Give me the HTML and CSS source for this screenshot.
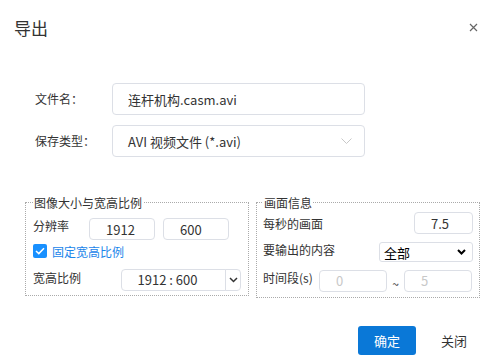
FILE: index.html
```html
<!DOCTYPE html>
<html lang="zh-CN">
<head>
    <meta charset="UTF-8">
    <meta name="viewport" content="width=device-width, initial-scale=1.0">
    <title>导出</title>
    <link rel="stylesheet" href="styles.css">
</head>
<body>

    <div class="dialog">
        <div class="dialog-header">
            <span class="dialog-title">导出</span>
            <button class="close-btn" title="关闭">
                <svg width="9" height="9" viewBox="0 0 9 9"><path d="M1 1 L8 8 M8 1 L1 8" stroke="#666" stroke-width="1.2" fill="none"/></svg>
            </button>
        </div>

        <div class="form">
            <div class="form-row">
                <label class="form-label">文件名：</label>
                <input class="text-input" type="text" value="连杆机构.casm.avi">
            </div>
            <div class="form-row">
                <label class="form-label">保存类型：</label>
                <div class="select-box">
                    <span>AVI 视频文件 (*.avi)</span>
                    <svg width="11" height="6" viewBox="0 0 11 6"><path d="M0.5 0.5 L5.5 5.5 L10.5 0.5" stroke="#c8c8c8" stroke-width="1" fill="none"/></svg>
                </div>
            </div>
        </div>

        <div class="groups">
            <fieldset class="group group-size">
                <legend>图像大小与宽高比例</legend>
                <div class="group-row row-resolution">
                    <span class="group-label">分辨率</span>
                    <input class="num-input res-input" type="text" value="1912">
                    <input class="num-input res-input" type="text" value="600">
                </div>
                <div class="group-row row-check">
                    <span class="check-box">
                        <svg width="10" height="8" viewBox="0 0 10 8"><path d="M1 4 L3.8 6.6 L9 1.2" stroke="#fff" stroke-width="1.5" fill="none"/></svg>
                    </span>
                    <span class="check-text">固定宽高比例</span>
                </div>
                <div class="group-row row-ratio">
                    <span class="group-label">宽高比例</span>
                    <div class="ratio-box">1912 : 600</div>
                    <div class="ratio-btn">
                        <svg width="9" height="6" viewBox="0 0 9 6"><path d="M1 1 L4.5 4.5 L8 1" stroke="#333" stroke-width="1.5" fill="none"/></svg>
                    </div>
                </div>
            </fieldset>

            <fieldset class="group group-frame">
                <legend>画面信息</legend>
                <div class="group-row row-fps">
                    <span class="group-label">每秒的画面</span>
                    <input class="num-input fps-input" type="text" value="7.5">
                </div>
                <div class="group-row row-content">
                    <span class="group-label">要输出的内容</span>
                    <div class="content-select">
                        <span>全部</span>
                        <svg width="9" height="6" viewBox="0 0 9 6"><path d="M1 1 L4.5 4.5 L8 1" stroke="#000" stroke-width="2" fill="none"/></svg>
                    </div>
                </div>
                <div class="group-row row-time">
                    <span class="group-label">时间段(s)</span>
                    <input class="num-input time-input" type="text" value="0" disabled>
                    <span class="tilde">~</span>
                    <input class="num-input time-input" type="text" value="5" disabled>
                </div>
            </fieldset>
        </div>

        <div class="dialog-footer">
            <button class="btn btn-primary">确定</button>
            <button class="btn btn-plain">关闭</button>
        </div>
    </div>

</body>
</html>
```

FILE: styles.css
```css
body {
    margin: 0;
    padding: 0;
    background-color: #fff;
    font-family: "Noto Sans CJK SC", "Noto Sans", sans-serif;
    color: #333;
}
.dialog {
    width: 492px;
    height: 362px;
}
.dialog-header {
    height: 55px;
    display: flex;
    align-items: center;
    justify-content: space-between;
    padding: 0 14px 0 14px;
}
.dialog-title {
    font-size: 17px;
    line-height: 20px;
    color: #333;
}
.close-btn {
    border: none;
    background: none;
    padding: 0;
    width: 9px;
    height: 9px;
    display: flex;
}

/* top form */
.form {
    margin-top: 28px;
    padding-left: 35px;
}
.form-row {
    display: flex;
    align-items: center;
    margin-bottom: 10px;
}
.form-label {
    width: 77px;
    font-size: 12px;
    line-height: 16px;
}
.text-input,
.select-box {
    box-sizing: border-box;
    width: 253px;
    height: 32px;
    border: 1px solid #dcdfe6;
    border-radius: 4px;
    padding: 0 12px 0 15px;
    font-family: inherit;
    font-size: 13px;
    color: #333;
    outline: none;
}
.select-box {
    display: flex;
    align-items: center;
    justify-content: space-between;
}

/* group boxes */
.groups {
    display: flex;
    align-items: flex-start;
    gap: 7px;
    padding: 28px 0 0 25px;
}
.group {
    box-sizing: border-box;
    width: 224px;
    margin: 0;
    padding: 0 7px 4px;
    border: 1px dotted #aaa;
    min-width: 0;
    font-size: 12px;
}
.group legend {
    padding: 0 1px;
    line-height: 15px;
    font-size: 12px;
    color: #333;
}
.group-row {
    display: flex;
    align-items: center;
}
.group-label {
    line-height: 15px;
    white-space: nowrap;
}
.num-input {
    box-sizing: border-box;
    height: 22px;
    border: 1px solid #dcdfe6;
    border-radius: 4px;
    padding: 0 0 0 16px;
    font-family: inherit;
    font-size: 13px;
    color: #333;
    background: #fff;
    outline: none;
}
.num-input:disabled {
    color: #c8c8c8;
    background: #fff;
}

.row-resolution {
    margin-top: 8px;
    align-items: flex-start;
}
.row-resolution .group-label {
    width: 56px;
}
.res-input {
    width: 66px;
    margin-right: 8px;
}
.row-check {
    margin-top: 4px;
    height: 14px;
}
.check-box {
    box-sizing: border-box;
    width: 14px;
    height: 14px;
    border-radius: 2px;
    background-color: #1890ff;
    display: flex;
    align-items: center;
    justify-content: center;
    margin-right: 5px;
}
.check-text {
    color: #1a85ea;
    line-height: 15px;
}
.row-ratio {
    margin-top: 11px;
    align-items: flex-start;
}
.row-ratio .group-label {
    width: 88px;
    padding-top: 1px;
}
.ratio-box {
    box-sizing: border-box;
    width: 106px;
    height: 22px;
    border: 1px solid #dcdfe6;
    border-radius: 4px 0 0 4px;
    padding-left: 16px;
    font-size: 13px;
    line-height: 20px;
}
.ratio-btn {
    box-sizing: border-box;
    width: 16px;
    height: 22px;
    margin-left: -1px;
    border: 1px solid #dcdfe6;
    border-radius: 0 4px 4px 0;
    display: flex;
    align-items: center;
    justify-content: center;
}

.group-frame {
    padding: 0 6px 5px;
}
.row-fps {
    margin-top: 2px;
    justify-content: space-between;
}
.fps-input {
    width: 59px;
}
.row-content {
    margin-top: 8px;
    justify-content: space-between;
}
.row-content .group-label {
    align-self: flex-start;
}
.content-select {
    box-sizing: border-box;
    width: 94px;
    height: 20px;
    border: 1px solid #dcdfe6;
    border-radius: 3px;
    padding: 0 6px 0 4px;
    display: flex;
    align-items: center;
    justify-content: space-between;
    font-size: 13px;
    color: #000;
}
.row-time {
    margin-top: 7px;
}
.row-time .group-label {
    width: 56px;
    align-self: flex-start;
    padding-top: 1px;
}
.time-input {
    width: 68px;
}
.tilde {
    width: 17px;
    text-align: center;
    font-size: 12px;
    padding-top: 6px;
}

/* footer */
.dialog-footer {
    display: flex;
    justify-content: flex-end;
    gap: 9px;
    padding: 28px 9px 0 0;
}
.btn {
    width: 58px;
    height: 29px;
    border: none;
    border-radius: 3px;
    font-family: inherit;
    font-size: 13px;
    padding: 0;
}
.btn-primary {
    background-color: #0a78d7;
    color: #fff;
}
.btn-plain {
    background: none;
    color: #333;
}
```
